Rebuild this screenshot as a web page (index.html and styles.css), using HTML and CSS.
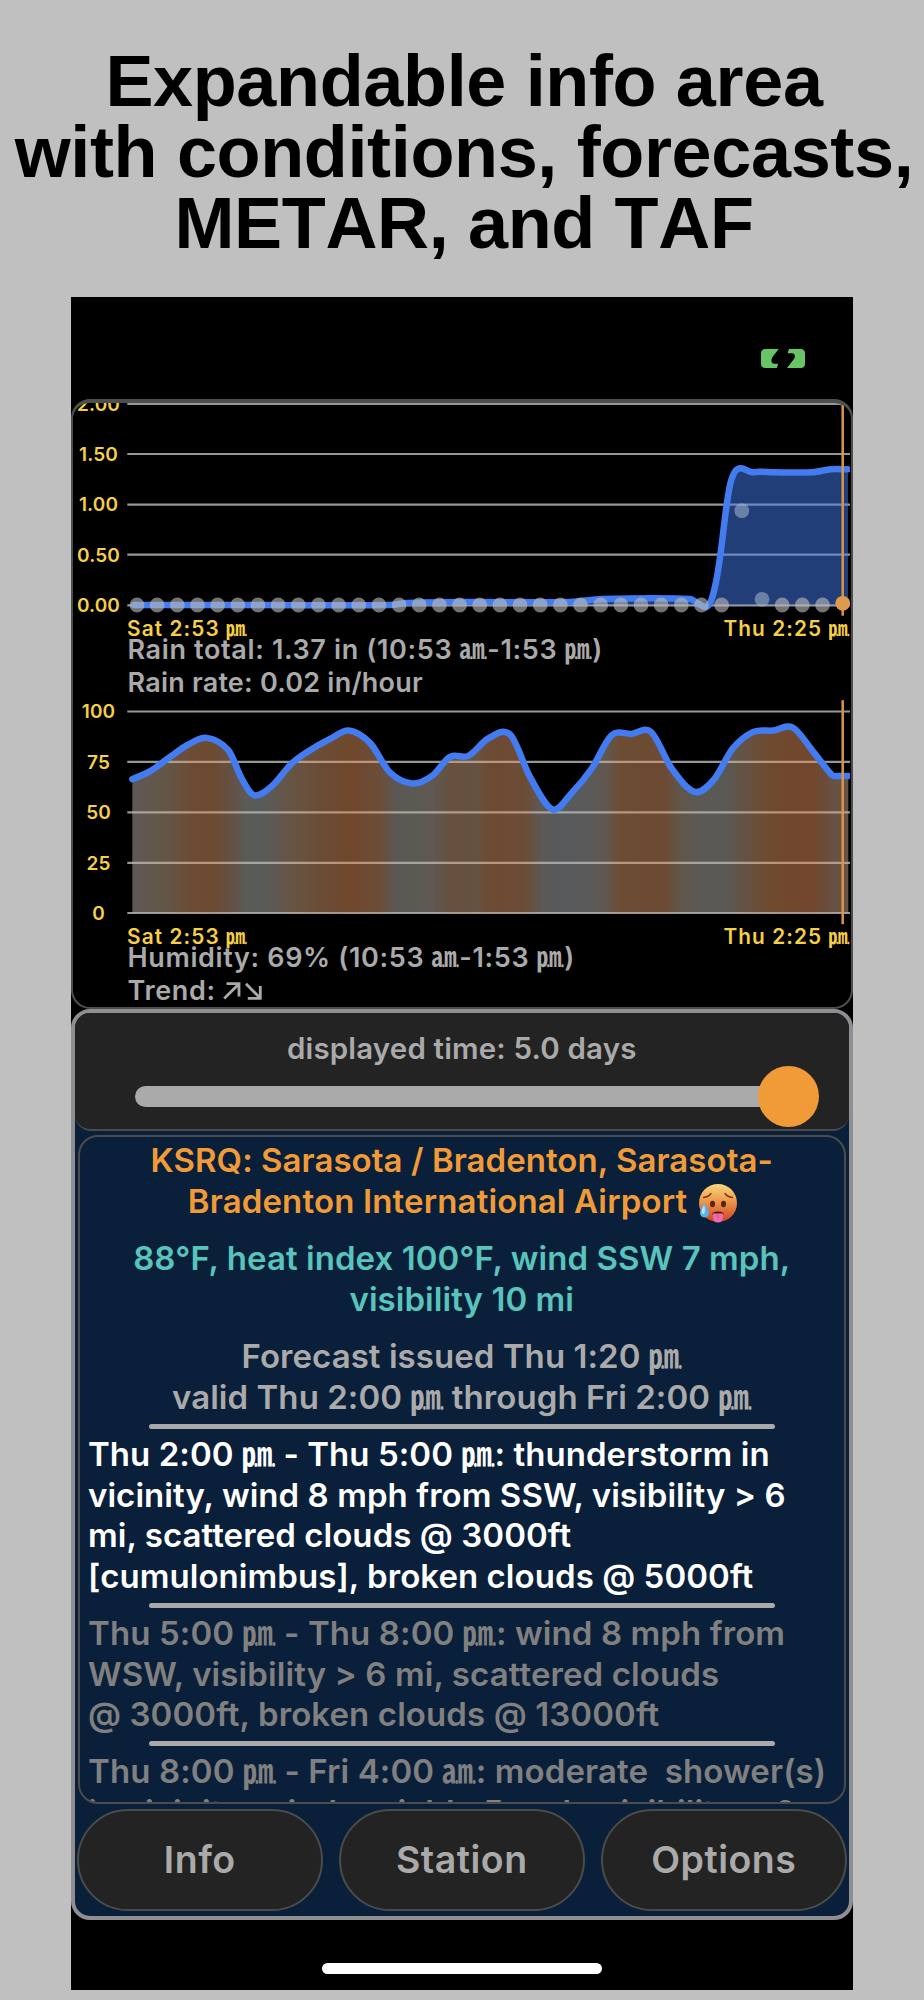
FILE: index.html
```
<!DOCTYPE html>
<html lang="en">
<head>
    <meta charset="UTF-8">
    <meta name="viewport" content="width=device-width, initial-scale=1.0">
    <title>Expandable info area</title>
    <link rel="stylesheet" href="styles.css">
</head>
<body>
    <h1 class="headline">
        <span>Expandable info area</span>
        <span>with conditions, forecasts,</span>
        <span>METAR, and TAF</span>
    </h1>

    <div class="phone">
        <div class="status-bar">
            <svg class="battery" viewBox="0 0 44 19">
                <path d="M4.500 0H17.700L12 7.200Q9.500 10.500 10.800 13.200Q11.600 14.800 13.600 14.800H17.200L15.800 19H4.500Q0 19 0 14.500V4.500Q0 0 4.500 0Z"/>
                <path d="M28 0H39.500Q44 0 44 4.500V14.500Q44 19 39.500 19H26L32.400 10.800Q34.800 7.500 33.400 5.400Q32.600 4.200 30.800 4.200H26.600Z"/>
            </svg>
        </div>

        <div class="charts">
            <svg class="chart" viewBox="73 403 777 216.500">
                <g class="grid">
                    <path d="M127.300 403.800H850M127.300 454H850M127.300 504.700H850M127.300 554.700H850M127.300 605.300H850"/>
                </g>
                <g class="axis">
                    <text x="98.500" y="410.500">2.00</text>
                    <text x="98.500" y="460.800">1.50</text>
                    <text x="98.500" y="511.300">1.00</text>
                    <text x="98.500" y="561.500">0.50</text>
                    <text x="98.500" y="612.200">0.00</text>
                </g>
                <path class="rain-fill" id="rain-fill"/>
                <path class="line" id="rain-line"/>
                <g class="dots">
                    <path d="M137 605H723"/>
                    <circle cx="741.800" cy="510.700" r="7.400"/>
                    <circle cx="762" cy="599.300" r="7.400"/>
                    <path d="M782.200 605H823"/>
                </g>
                <path class="now" d="M842.700 405V615.700"/>
                <circle class="now-dot" cx="842.700" cy="603.300" r="7.400"/>
            </svg>
            <div class="dates"><span>Sat 2:53 ㏘</span><span>Thu 2:25 ㏘</span></div>
            <div class="readout">
                <p>Rain total: 1.37 in (10:53 ㏂-1:53 ㏘)</p>
                <p class="tight">Rain rate: 0.02 in/hour</p>
            </div>

            <svg class="chart" viewBox="73 698.800 777 229">
                <defs>
                    <linearGradient id="heat" gradientUnits="userSpaceOnUse" x1="132" y1="0" x2="848" y2="0"></linearGradient>
                </defs>
                <g class="grid">
                    <path d="M127.300 711.300H850M127.300 761.700H850M127.300 812.200H850M127.300 862.700H850M127.300 912.800H850"/>
                </g>
                <g class="axis">
                    <text x="98.500" y="718.200">100</text>
                    <text x="98.500" y="768.700">75</text>
                    <text x="98.500" y="819">50</text>
                    <text x="98.500" y="869.500">25</text>
                    <text x="98.500" y="919.700">0</text>
                </g>
                <path id="humidity-fill" fill="url(#heat)" fill-opacity="0.5"/>
                <path class="line" id="humidity-line"/>
                <path class="now" d="M842.700 700V924"/>
            </svg>
            <div class="dates"><span>Sat 2:53 ㏘</span><span>Thu 2:25 ㏘</span></div>
            <div class="readout second">
                <p>Humidity: 69% (10:53 ㏂-1:53 ㏘)</p>
                <p>Trend:
                    <svg class="trend" viewBox="0 0 40 18">
                        <path d="M1.200 16.500L15.600 2.200M3.500 1.700H16V14.500M23 1.700L37 16M24.800 16.300H37.300V4"/>
                    </svg>
                </p>
            </div>
        </div>

        <div class="panel">
            <div class="time-slider">
                <p>displayed time: 5.0 days</p>
                <div class="track"><div class="thumb"></div></div>
            </div>

            <div class="info">
                <p class="station">KSRQ: Sarasota / Bradenton, Sarasota-<br><span class="wide">Bradenton International Airport</span>
                    <svg class="hot-face" viewBox="0 0 40 40">
                        <defs>
                            <linearGradient id="face" x1="0" y1="0" x2="0" y2="1">
                                <stop offset="0" stop-color="#f8d77d"/>
                                <stop offset="0.400" stop-color="#efa050"/>
                                <stop offset="1" stop-color="#d0411f"/>
                            </linearGradient>
                        </defs>
                        <circle cx="20" cy="20" r="19" fill="url(#face)"/>
                        <path d="M5.500 14.500Q10.500 14 13 10.500M34.500 14.500Q29.500 14 27 10.500" fill="none" stroke="#7a3413" stroke-width="1.300" stroke-linecap="round"/>
                        <ellipse cx="14.500" cy="21" rx="2.500" ry="3.200" fill="#5f220e"/>
                        <ellipse cx="25.500" cy="21" rx="2.500" ry="3.200" fill="#5f220e"/>
                        <path d="M14 31.500Q14.500 28.500 20 28.500Q25.500 28.500 26 31.500Z" fill="#5a150f"/>
                        <path d="M15 30.500H25V34Q25 39.500 20 39.500Q15 39.500 15 34Z" fill="#ee6cae"/>
                        <path d="M20 32V35" stroke="#cf4486" stroke-width="1"/>
                        <path d="M6 20Q11 27.500 10.800 30.500Q10.200 34.500 6.300 34.500Q2.200 34.200 2 30Q2.200 27 6 20Z" fill="#55b5f2"/>
                        <path d="M6 22Q8 27 6 31Q4 31 3.500 29Q4 26 6 22Z" fill="#bfe6fb"/>
                    </svg>
                </p>
                <p class="conditions">88°F, heat index 100°F, wind SSW 7 mph,<br>visibility 10 mi</p>
                <p class="issued">Forecast issued Thu 1:20 ㏘<br>valid Thu 2:00 ㏘ through Fri 2:00 ㏘</p>
                <hr>
                <p class="period current">Thu 2:00 ㏘ - Thu 5:00 ㏘: thunderstorm in<br>vicinity, wind 8 mph from SSW, visibility &gt; 6<br>mi, scattered clouds @ 3000ft<br>[cumulonimbus], broken clouds @ 5000ft</p>
                <hr>
                <p class="period">Thu 5:00 ㏘ - Thu 8:00 ㏘: wind 8 mph from<br>WSW, visibility &gt; 6 mi, scattered clouds<br>@ 3000ft, broken clouds @ 13000ft</p>
                <hr>
                <p class="period">Thu 8:00 ㏘ - Fri 4:00 ㏂: moderate&nbsp; shower(s)<br>in vicinity, wind variable 5 mph, visibility &gt; 6</p>
            </div>

            <div class="buttons">
                <button>Info</button>
                <button>Station</button>
                <button>Options</button>
            </div>
        </div>

        <div class="home-indicator"></div>
    </div>

    <script src="charts.js"></script>
</body>
</html>
```
FILE: charts.js
```
const rain = [
    [134, 605], [260, 605], [390, 605], [407, 603], [460, 602], [570, 602], [602, 599], [690, 599],
    [699, 604], [706, 607], [711, 601], [716, 582], [720.5, 554], [726, 510], [730, 485], [735, 471.5],
    [741, 468.3], [751, 472], [760, 471.7], [775, 472.3], [812, 472.3], [831, 469.3], [848, 469.3]
];

const humidity = [
    [132.3, 779], [150.7, 770.7], [170, 756.7], [188.3, 744.3], [206.7, 737.7], [228.3, 750],
    [241.7, 778.3], [254, 795], [271.7, 786], [291.7, 763.3], [310, 750], [330, 738.7],
    [348.7, 730.3], [370, 742.7], [390, 772.3], [412.3, 783.3], [431.7, 776], [450, 756.7],
    [468.3, 755.7], [488.3, 738.3], [510, 734.3], [530, 776.7], [552.7, 809.3], [571.7, 792.7],
    [591.7, 768.3], [611.7, 735], [631.7, 733.7], [651, 731.7], [671.7, 768.3], [695, 791.7],
    [714, 779.3], [732.7, 748.3], [753.3, 731.7], [773.3, 730.3], [792.7, 727.3], [813.3, 751.7],
    [831, 774], [834, 775.7], [848.3, 775.7]
];

// Background tint of the humidity chart: x position, colour
const tints = [
    [132, '#beb0aa'], [170, '#c8a888'], [190, '#d69868'], [212, '#d89460'], [228, '#ca9e80'],
    [246, '#b4b4ac'], [262, '#aeb6b6'], [290, '#caa888'], [325, '#d69668'], [350, '#de8e56'],
    [380, '#d69a70'], [395, '#b8aca4'], [412, '#b6b2a6'], [432, '#beaea6'], [450, '#cca07e'],
    [475, '#cca484'], [492, '#da9466'], [524, '#d89668'], [540, '#b8b0a6'], [560, '#acb4b6'],
    [590, '#b4b4b0'], [608, '#c4ac98'], [620, '#d89866'], [665, '#d89466'], [680, '#c0ac94'],
    [700, '#b4b2aa'], [728, '#b4b0a6'], [745, '#caa488'], [770, '#dc945c'], [810, '#e48c58'],
    [825, '#d49870'], [835, '#caa486'], [848, '#caa486']
];

// Smooth path through all the points
function curve(p) {
    let d = 'M' + p[0];
    for (let i = 0; i < p.length - 1; i++) {
        const a = p[i - 1] || p[i], b = p[i], c = p[i + 1], e = p[i + 2] || c;
        const w = c[0] - b[0];
        const m1 = (c[1] - a[1]) / (c[0] - a[0]);
        const m2 = (e[1] - b[1]) / (e[0] - b[0]);
        d += 'C' + [b[0] + w / 3, b[1] + m1 * w / 3, c[0] - w / 3, c[1] - m2 * w / 3, c[0], c[1]];
    }
    return d;
}

function draw(name, points, base) {
    const d = curve(points);
    document.getElementById(name + '-line').setAttribute('d', d);
    document.getElementById(name + '-fill').setAttribute('d', d + 'V' + base + 'H' + points[0][0] + 'Z');
}

draw('rain', rain, 605);
draw('humidity', humidity, 912.8);

tints.forEach(function (t) {
    const stop = document.createElementNS('http://www.w3.org/2000/svg', 'stop');
    stop.setAttribute('offset', (t[0] - 132) / 716);
    stop.setAttribute('stop-color', t[1]);
    document.getElementById('heat').appendChild(stop);
});
```
FILE: styles.css
```
* {
    margin: 0;
    padding: 0;
    box-sizing: border-box;
}

body {
    background: #c0c0c0;
    height: 2000px;
    overflow: hidden;
    font-family: Inter, "Noto Sans CJK SC", sans-serif;
    font-weight: 600;
}

.headline {
    height: 296.5px;
    padding: 45.6px 0 0 4px;
    font: bold 72px/71.4px "Liberation Sans", Arial, sans-serif;
    letter-spacing: -0.35px;
    font-kerning: none;
    text-align: center;
    color: #000;
}

.headline span {
    display: block;
    white-space: nowrap;
}

.phone {
    width: 781.5px;
    height: 1693.5px;
    margin-left: 71px;
    background: #000;
}

.status-bar {
    height: 102.5px;
    padding: 52.2px 48px 0 0;
    display: flex;
    justify-content: flex-end;
    align-items: flex-start;
}

.battery {
    width: 44px;
    height: 19px;
    fill: #67c567;
}

.charts {
    height: 609.5px;
    border: 2px solid #4e4e4e;
    border-top-width: 4px;
    border-radius: 19px;
    overflow: hidden;
}

.chart {
    display: block;
    width: 777px;
}

.grid path {
    stroke: #979797;
    stroke-width: 2.2;
}

.axis text {
    font-size: 19px;
    letter-spacing: 0.1px;
    text-anchor: middle;
    fill: #f5cf45;
}

.line {
    fill: none;
    stroke: #427cf0;
    stroke-width: 6.5;
    stroke-linecap: round;
    stroke-linejoin: round;
}

.rain-fill {
    fill: #427cf0;
    fill-opacity: 0.5;
}

.dots path {
    fill: none;
    stroke: #b9b9bb;
    stroke-opacity: 0.62;
    stroke-width: 14.8;
    stroke-linecap: round;
    stroke-dasharray: 0 20.16;
}

.dots circle {
    fill: #a9b6cc;
    fill-opacity: 0.55;
}

.now {
    stroke: #d9964a;
    stroke-width: 2.5;
}

.now-dot {
    fill: #e09a4b;
}

.dates {
    display: flex;
    justify-content: space-between;
    height: 17px;
    padding-left: 54px;
    font-size: 20.8px;
    line-height: 17px;
    letter-spacing: 1.1px;
    white-space: nowrap;
    color: #f5cf45;
}

.readout {
    margin-top: -4px;
    padding-left: 54.5px;
    font-size: 27px;
    line-height: 33.3px;
    letter-spacing: 0.64px;
    white-space: nowrap;
    color: #aaa;
}

.readout p {
    height: 33.3px;
}

.readout .tight {
    letter-spacing: 0.22px;
}

.readout.second {
    margin-top: -4.2px;
}

.trend {
    width: 40px;
    height: 18px;
    vertical-align: 0;
    fill: none;
    stroke: #aaa;
    stroke-width: 2.8;
}

.panel {
    height: 911px;
    border: 4px solid #8e8e93;
    border-radius: 19px;
    background: #0a1f39;
    overflow: hidden;
}

.time-slider {
    height: 118.5px;
    padding: 17.5px 60px 0;
    border-bottom: 2px solid #4b4b4b;
    border-radius: 0 0 16px 16px;
    background: #232323;
    text-align: center;
    font-size: 29.5px;
    line-height: 36px;
    letter-spacing: 0.16px;
    color: #aaa;
}

.track {
    width: 652px;
    height: 21px;
    margin-top: 20.3px;
    display: flex;
    align-items: center;
    justify-content: flex-end;
    border-radius: 11px;
    background: #aaa;
}

.thumb {
    flex: none;
    width: 61px;
    height: 61px;
    margin-right: -32px;
    border-radius: 50%;
    background: #f09b38;
}

.info {
    height: 669.5px;
    margin: 3.5px 3px 0;
    padding: 3px 0 0;
    border: 2px solid #4b4b4b;
    border-radius: 20px;
    overflow: hidden;
    text-align: center;
    font-size: 33px;
    line-height: 41px;
    letter-spacing: 0.05px;
    white-space: nowrap;
    color: #aaa;
}

.station {
    color: #f09b38;
}

.station .wide {
    letter-spacing: 0.14px;
}

.hot-face {
    width: 40px;
    height: 40px;
    margin: -6px -2px -6px 2px;
    vertical-align: -7px;
    position: relative;
    top: -3px;
}

.conditions {
    margin: 16px 0;
    color: #59c4bc;
}

.info hr {
    width: 626px;
    height: 5px;
    margin: 6px auto 5.4px;
    border: 0;
    border-radius: 3px;
    background: #aaa;
}

.period {
    padding-left: 8px;
    text-align: left;
    line-height: 40.65px;
    letter-spacing: 0.1px;
    color: #808080;
}

.period.current {
    letter-spacing: 0.06px;
    color: #fff;
}

.buttons {
    display: flex;
    gap: 16.5px;
    padding: 4.5px 2px 0;
}

.buttons button {
    flex: 1;
    height: 102px;
    border: 2px solid #4b4b4b;
    border-radius: 51px;
    background: #232323;
    font: 600 37.5px Inter, sans-serif;
    letter-spacing: 0.5px;
    color: #aaa;
}

.home-indicator {
    width: 280px;
    height: 11px;
    margin: 43.5px auto 0;
    border-radius: 6px;
    background: #fff;
}
```
